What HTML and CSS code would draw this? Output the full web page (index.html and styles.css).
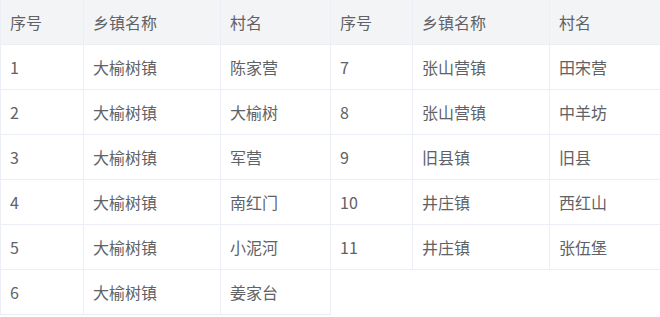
FILE: index.html
```html
<!DOCTYPE html>
<html lang="zh-CN">
<head>
<meta charset="utf-8">
<title>村名表</title>
<link rel="stylesheet" href="styles.css">
</head>
<body>
<div class="wrap">
  <table class="tbl tbl-left">
    <colgroup><col class="c1"><col class="c2"><col class="c3"></colgroup>
    <thead>
      <tr><th>序号</th><th>乡镇名称</th><th>村名</th></tr>
    </thead>
    <tbody>
      <tr><td>1</td><td>大榆树镇</td><td>陈家营</td></tr>
      <tr><td>2</td><td>大榆树镇</td><td>大榆树</td></tr>
      <tr><td>3</td><td>大榆树镇</td><td>军营</td></tr>
      <tr><td>4</td><td>大榆树镇</td><td>南红门</td></tr>
      <tr><td>5</td><td>大榆树镇</td><td>小泥河</td></tr>
      <tr><td>6</td><td>大榆树镇</td><td>姜家台</td></tr>
    </tbody>
  </table>
  <table class="tbl tbl-right">
    <colgroup><col class="r1"><col class="r2"><col class="r3"></colgroup>
    <thead>
      <tr><th>序号</th><th>乡镇名称</th><th>村名</th></tr>
    </thead>
    <tbody>
      <tr><td>7</td><td>张山营镇</td><td>田宋营</td></tr>
      <tr><td>8</td><td>张山营镇</td><td>中羊坊</td></tr>
      <tr><td>9</td><td>旧县镇</td><td>旧县</td></tr>
      <tr><td>10</td><td>井庄镇</td><td>西红山</td></tr>
      <tr><td>11</td><td>井庄镇</td><td>张伍堡</td></tr>
    </tbody>
  </table>
</div>
</body>
</html>
```
FILE: styles.css
```css
html, body {
  margin: 0;
  padding: 0;
  background: #ffffff;
}
body {
  font-family: "Noto Sans CJK SC", "Noto Sans", sans-serif;
  font-size: 16px;
  color: #606266;
}
.wrap {
  display: flex;
  align-items: flex-start;
  width: 660px;
  overflow: hidden;
}
.tbl {
  border-collapse: separate;
  border-spacing: 0;
  table-layout: fixed;
  flex: none;
}
.tbl-left {
  width: 331px;
  border-left: 1px solid #ebeef5;
}
.tbl-right {
  width: 330px;
}
.c1 { width: 83px; }
.c2 { width: 137px; }
.c3 { width: 110px; }
.r1 { width: 82px; }
.r2 { width: 137px; }
.r3 { width: 111px; }
.tbl th,
.tbl td {
  height: 45px;
  padding: 0 0 0 9px;
  box-sizing: border-box;
  text-align: left;
  font-weight: normal;
  line-height: 22px;
  border-right: 1px solid #ebeef5;
  border-bottom: 1px solid #ebeef5;
  white-space: nowrap;
  vertical-align: middle;
}
.tbl th {
  background: #f3f4f6;
  color: #606266;
}
.tbl tr {
  height: 45px;
}
```
